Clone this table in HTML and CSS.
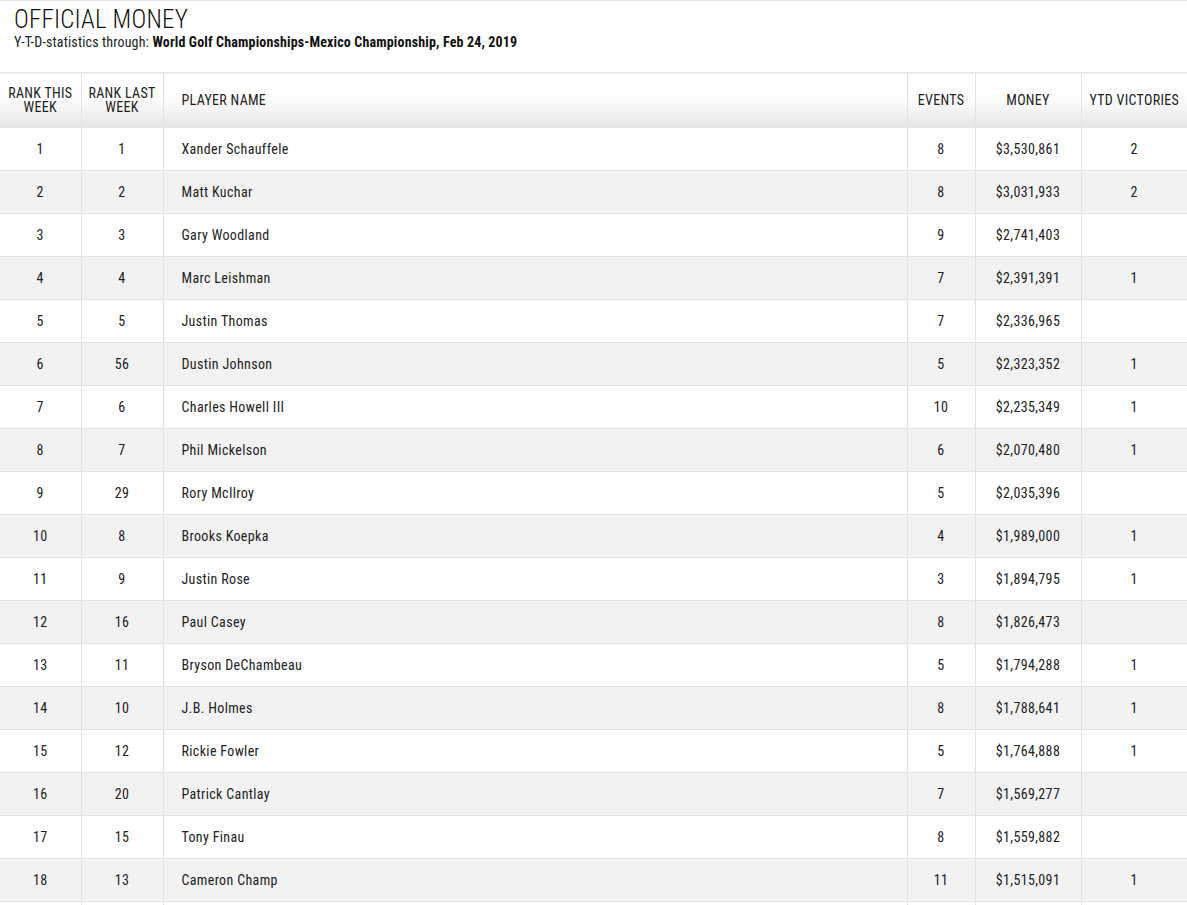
FILE: index.html
```html
<!DOCTYPE html>
<html lang="en">
<head>
<meta charset="utf-8">
<title>Official Money</title>
<link rel="stylesheet" href="styles.css">
</head>
<body>
<div class="page">
  <header class="head">
    <h1 class="title">OFFICIAL MONEY</h1>
    <p class="sub">Y-T-D-statistics through: <b>World Golf Championships-Mexico Championship, Feb 24, 2019</b></p>
  </header>
  <table class="stats">
    <colgroup>
      <col class="c1"><col class="c2"><col class="c3"><col class="c4"><col class="c5"><col class="c6">
    </colgroup>
    <thead>
      <tr>
        <th>RANK THIS<br>WEEK</th>
        <th>RANK LAST<br>WEEK</th>
        <th class="name">PLAYER NAME</th>
        <th>EVENTS</th>
        <th>MONEY</th>
        <th>YTD VICTORIES</th>
      </tr>
    </thead>
    <tbody>
      <tr><td>1</td><td>1</td><td class="name">Xander Schauffele</td><td>8</td><td>$3,530,861</td><td>2</td></tr>
      <tr><td>2</td><td>2</td><td class="name">Matt Kuchar</td><td>8</td><td>$3,031,933</td><td>2</td></tr>
      <tr><td>3</td><td>3</td><td class="name">Gary Woodland</td><td>9</td><td>$2,741,403</td><td></td></tr>
      <tr><td>4</td><td>4</td><td class="name">Marc Leishman</td><td>7</td><td>$2,391,391</td><td>1</td></tr>
      <tr><td>5</td><td>5</td><td class="name">Justin Thomas</td><td>7</td><td>$2,336,965</td><td></td></tr>
      <tr><td>6</td><td>56</td><td class="name">Dustin Johnson</td><td>5</td><td>$2,323,352</td><td>1</td></tr>
      <tr><td>7</td><td>6</td><td class="name">Charles Howell III</td><td>10</td><td>$2,235,349</td><td>1</td></tr>
      <tr><td>8</td><td>7</td><td class="name">Phil Mickelson</td><td>6</td><td>$2,070,480</td><td>1</td></tr>
      <tr><td>9</td><td>29</td><td class="name">Rory McIlroy</td><td>5</td><td>$2,035,396</td><td></td></tr>
      <tr><td>10</td><td>8</td><td class="name">Brooks Koepka</td><td>4</td><td>$1,989,000</td><td>1</td></tr>
      <tr><td>11</td><td>9</td><td class="name">Justin Rose</td><td>3</td><td>$1,894,795</td><td>1</td></tr>
      <tr><td>12</td><td>16</td><td class="name">Paul Casey</td><td>8</td><td>$1,826,473</td><td></td></tr>
      <tr><td>13</td><td>11</td><td class="name">Bryson DeChambeau</td><td>5</td><td>$1,794,288</td><td>1</td></tr>
      <tr><td>14</td><td>10</td><td class="name">J.B. Holmes</td><td>8</td><td>$1,788,641</td><td>1</td></tr>
      <tr><td>15</td><td>12</td><td class="name">Rickie Fowler</td><td>5</td><td>$1,764,888</td><td>1</td></tr>
      <tr><td>16</td><td>20</td><td class="name">Patrick Cantlay</td><td>7</td><td>$1,569,277</td><td></td></tr>
      <tr><td>17</td><td>15</td><td class="name">Tony Finau</td><td>8</td><td>$1,559,882</td><td></td></tr>
      <tr><td>18</td><td>13</td><td class="name">Cameron Champ</td><td>11</td><td>$1,515,091</td><td>1</td></tr>
      <tr class="tail"><td></td><td></td><td class="name"></td><td></td><td></td><td></td></tr>
    </tbody>
  </table>
</div>
</body>
</html>
```

FILE: styles.css
```css
html, body {
  margin: 0;
  padding: 0;
  background: #fff;
}
body {
  font-family: "Roboto Condensed", "Liberation Sans Narrow", "DejaVu Sans Condensed", Roboto, sans-serif;
  font-stretch: condensed;
  color: #222;
  overflow: hidden;
}
.page {
  width: 1187px;
  border-top: 1px solid #e6e6e6;
}
.head {
  padding: 6px 14px 0;
  height: 71px;
  box-sizing: border-box;
}
.title {
  margin: 0;
  font-size: 25px;
  font-weight: 300;
  line-height: 26px;
  color: #111;
  letter-spacing: 0.2px;
}
.sub {
  margin: 1px 0 0;
  font-size: 14px;
  line-height: 16px;
  color: #222;
  letter-spacing: 0.15px;
}
.sub b { font-weight: 700; color: #111; }
.stats {
  width: 1187px;
  border-collapse: collapse;
  table-layout: fixed;
  border-top: 1px solid #e3e3e3;
}
.c1 { width: 81px; }
.c2 { width: 82px; }
.c3 { width: 744px; }
.c4 { width: 68px; }
.c5 { width: 106px; }
.c6 { width: 106px; }
.stats th {
  height: 54px;
  padding: 0 2px;
  font-size: 14px;
  font-weight: 400;
  line-height: 14px;
  letter-spacing: 0.3px;
  text-align: center;
  color: #222;
  background: linear-gradient(to bottom, #ffffff 0%, #ffffff 40%, #e6e6e6 100%);
  border-left: 1px solid #e3e3e3;
}
.stats td {
  height: 42px;
  padding: 0 4px;
  font-size: 14px;
  letter-spacing: 0.35px;
  text-align: center;
  color: #222;
  border-left: 1px solid #e3e3e3;
  border-top: 1px solid #e3e3e3;
}
.stats th:first-child, .stats td:first-child { border-left: none; }
.stats .name { text-align: left; padding-left: 18px; }
.stats tbody tr:nth-child(even) td { background: #f2f2f2; }
.stats tbody tr.tail td { background: #fff; }
```
